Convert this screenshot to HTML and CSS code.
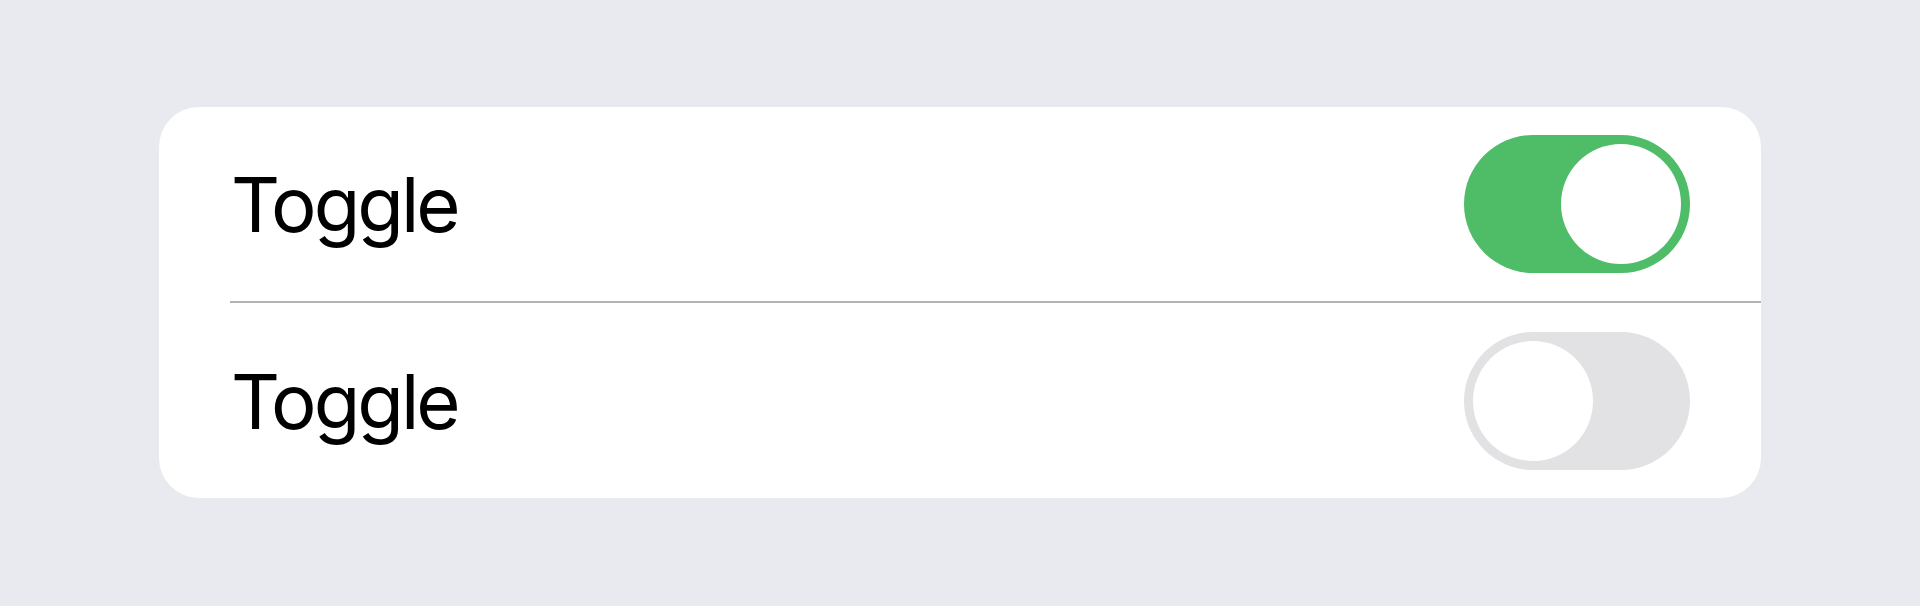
FILE: index.html
```html
<!doctype html>
<html>
    <head>
        <title>Toggle</title>
        <link rel="stylesheet" href="styles.css">
    </head>
    <body>
        <div class="list_card">
            <div class="list_row">
                <span class="row_label">Toggle</span>
                <div class="switch switch_on"><div class="switch_knob"></div></div>
            </div>
            <div class="row_divider"></div>
            <div class="list_row">
                <span class="row_label">Toggle</span>
                <div class="switch"><div class="switch_knob"></div></div>
            </div>
        </div>
    </body>
</html>
```
FILE: styles.css
```css
body {
    padding: 0;
    margin: 0;
    background-color: #e9eaef;
    font-family: Inter, "Liberation Sans", sans-serif;
}
.list_card {
    width: 1602px;
    margin-top: 107px;
    margin-left: 159px;
    background-color: #fff;
    border-radius: 40px;
    overflow: hidden;
}
.list_row {
    display: flex;
    align-items: center;
    justify-content: space-between;
    height: 194px;
    padding: 0 71px 0 72px;
}
.list_row:last-child {
    height: 195px;
}
.row_label {
    font-size: 76px;
    letter-spacing: -3px;
    color: #000;
}
.row_divider {
    height: 2px;
    margin-left: 71px;
    background-color: #b4b4b6;
}
.switch {
    display: flex;
    justify-content: flex-start;
    box-sizing: border-box;
    width: 226px;
    height: 138px;
    padding: 9px;
    border-radius: 69px;
    background-color: #e2e2e4;
}
.switch_on {
    justify-content: flex-end;
    background-color: #4fbc67;
}
.switch_knob {
    width: 120px;
    height: 120px;
    border-radius: 50%;
    background-color: #fff;
}
```
